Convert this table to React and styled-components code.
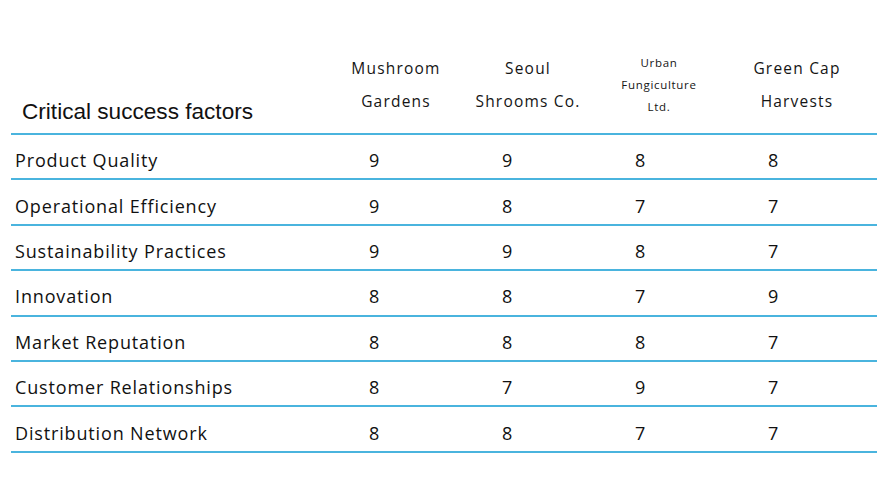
import React from 'react'
import styled, { createGlobalStyle } from 'styled-components'

const GlobalStyle = createGlobalStyle`
  body {
    margin: 0;
    background: #ffffff;
  }
`

const Page = styled.div`
  width: 877px;
  height: 479px;
  overflow: hidden;
  padding-top: 36px;
  box-sizing: border-box;
  font-family: 'Open Sans', 'DejaVu Sans', sans-serif;
  color: #111111;
`

const Table = styled.table`
  margin-left: 11px;
  width: 866px;
  border-collapse: collapse;
  table-layout: fixed;

  th,
  td {
    box-sizing: border-box;
  }
`

const Col = styled.col`
  width: ${props => props.w}px;
`

const HeadRow = styled.tr`
  height: 98px;
  border-bottom: 2px solid #4ab4de;
`

const TitleCell = styled.th`
  vertical-align: bottom;
  text-align: left;
  padding: 0 0 8px 11px;
  font-family: 'Liberation Sans', Arial, sans-serif;
  font-size: 22.6px;
  font-weight: 400;
  white-space: nowrap;
  color: #111111;
`

const CompanyCell = styled.th`
  text-align: center;
  vertical-align: middle;
  font-weight: 400;
  font-size: ${props => (props.small ? '11.5px' : '15.5px')};
  line-height: ${props => (props.small ? '22px' : '33px')};
  letter-spacing: ${props => (props.small ? '0.7px' : '1.2px')};
  color: #151515;
  padding: 0 ${props => props.shift}px 0 0;
  white-space: nowrap;
`

const Row = styled.tr`
  height: 45.4px;
  border-bottom: 2px solid #4ab4de;
`

const Label = styled.td`
  padding: 7px 0 0 4px;
  font-size: 18px;
  letter-spacing: 0.85px;
  white-space: nowrap;
`

const Score = styled.td`
  padding: 7px 0 0 ${props => props.pad}px;
  font-size: 18px;
  text-align: left;
`

const widths = [330, 132, 132, 132, 140]

const companies = [
  { lines: ['Mushroom', 'Gardens'], shift: 22 },
  { lines: ['Seoul', 'Shrooms Co.'], shift: 22 },
  { lines: ['Urban', 'Fungiculture', 'Ltd.'], small: true, shift: 24 },
  { lines: ['Green Cap', 'Harvests'], shift: 20 },
]

const factors = [
  ['Product Quality', 9, 9, 8, 8],
  ['Operational Efficiency', 9, 8, 7, 7],
  ['Sustainability Practices', 9, 9, 8, 7],
  ['Innovation', 8, 8, 7, 9],
  ['Market Reputation', 8, 8, 8, 7],
  ['Customer Relationships', 8, 7, 9, 7],
  ['Distribution Network', 8, 8, 7, 7],
]

const pads = [28, 29, 30, 31]

export default function App() {
  return (
    <Page>
      <GlobalStyle />
      <Table>
        <colgroup>
          {widths.map((w, i) => (
            <Col key={i} w={w} />
          ))}
        </colgroup>
        <thead>
          <HeadRow>
            <TitleCell>Critical success factors</TitleCell>
            {companies.map(c => (
              <CompanyCell key={c.lines[0]} small={c.small} shift={c.shift}>
                {c.lines.map(l => (
                  <div key={l}>{l}</div>
                ))}
              </CompanyCell>
            ))}
          </HeadRow>
        </thead>
        <tbody>
          {factors.map(([name, ...scores]) => (
            <Row key={name}>
              <Label>{name}</Label>
              {scores.map((s, i) => (
                <Score key={i} pad={pads[i]}>
                  {s}
                </Score>
              ))}
            </Row>
          ))}
        </tbody>
      </Table>
    </Page>
  )
}
